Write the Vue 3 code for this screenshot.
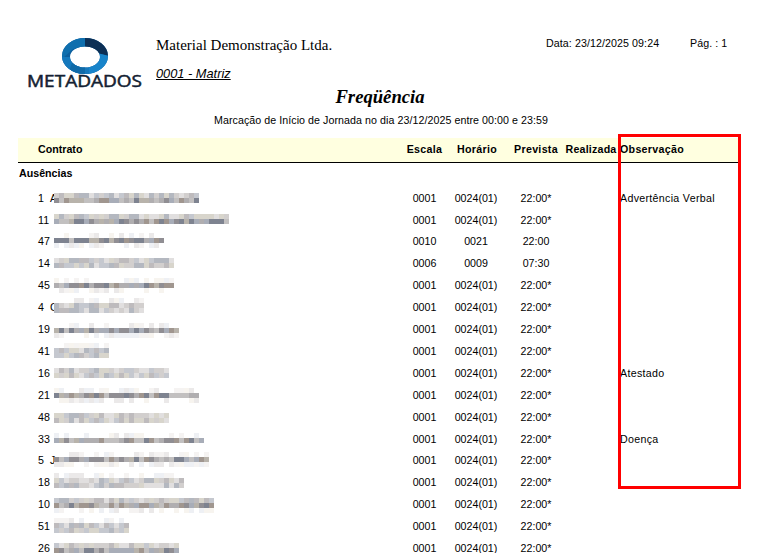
<script setup>
const rows = [
  { n: '1', first: 'A', w: 143, y: 6, bands: [2, 3], esc: '0001', hor: '0024(01)', prev: '22:00*', obs: 'Advertência Verbal' },
  { n: '11', w: 173, y: 5, bands: [2, 3], esc: '0001', hor: '0024(01)', prev: '22:00*', obs: '' },
  { n: '47', w: 108, y: 3, bands: [1, 3, 1], esc: '0010', hor: '0021', prev: '22:00', obs: '' },
  { n: '14', w: 118, y: 6, bands: [2, 2], esc: '0006', hor: '0009', prev: '07:30', obs: '' },
  { n: '45', w: 118, y: 4, bands: [1, 3, 1], esc: '0001', hor: '0024(01)', prev: '22:00*', obs: '' },
  { n: '4', first: 'C', w: 88, y: 2, bands: [1, 2, 2], esc: '0001', hor: '0024(01)', prev: '22:00*', obs: '' },
  { n: '19', w: 123, y: 5, bands: [1, 3, 1], esc: '0001', hor: '0024(01)', prev: '22:00*', obs: '' },
  { n: '41', w: 53, y: 3, bands: [1, 2, 2], esc: '0001', hor: '0024(01)', prev: '22:00*', obs: '' },
  { n: '16', w: 113, y: 6, bands: [2, 2], esc: '0001', hor: '0024(01)', prev: '22:00*', obs: 'Atestado' },
  { n: '21', w: 143, y: 4, bands: [1, 3, 1], esc: '0001', hor: '0024(01)', prev: '22:00*', obs: '' },
  { n: '48', w: 113, y: 7, bands: [2, 2], esc: '0001', hor: '0024(01)', prev: '22:00*', obs: '' },
  { n: '33', w: 148, y: 5, bands: [1, 3], esc: '0001', hor: '0024(01)', prev: '22:00*', obs: 'Doença' },
  { n: '5', first: 'J', w: 153, y: 3, bands: [1, 3, 1], esc: '0001', hor: '0024(01)', prev: '22:00*', obs: '' },
  { n: '18', w: 128, y: 2, bands: [1, 2, 2], esc: '0001', hor: '0024(01)', prev: '22:00*', obs: '' },
  { n: '10', w: 158, y: 5, bands: [2, 3, 1], esc: '0001', hor: '0024(01)', prev: '22:00*', obs: '' },
  { n: '51', w: 73, y: 3, bands: [1, 2, 2], esc: '0001', hor: '0024(01)', prev: '22:00*', obs: '' },
  { n: '26', w: 123, y: 6, bands: [2, 3], esc: '0001', hor: '0024(01)', prev: '22:00*', obs: '' }
]

let seed = 4217
function rnd() {
  seed = (seed * 16807) % 2147483647
  return (seed % 1000) / 1000
}

const palettes = {
  1: ['#f5f3f2', '#eef0f4', '#f7f4ef', '#ebe9e9'],
  2: ['#d2cfce', '#c5c8cf', '#d8d5cc', '#bebbbd', '#e1dfdf', '#b4b8c0'],
  3: ['#b0aeb0', '#908e93', '#a8adb8', '#b8b3ab', '#7e8390', '#a0968f', '#c2c0c0']
}

const mosaics = rows.map((r) => {
  const cells = []
  r.bands.forEach((level, b) => {
    if (!level) return
    for (let x = 0; x < r.w; x += 5) {
      const p = palettes[level]
      if (level === 1 && rnd() < 0.45) continue
      cells.push({ x, y: r.y + b * 5, fill: p[Math.floor(rnd() * p.length)] })
    }
  })
  return cells
})
</script>

<template>
  <div class="page">
    <header class="top">
      <svg class="logo" width="116" height="56" viewBox="0 0 116 56" role="img" aria-label="Metadados">
        <defs>
          <clipPath id="ring">
            <path clip-rule="evenodd" d="M35 19a23 18 0 1 0 46 0a23 18 0 1 0 -46 0zM43 20a15 10.5 0 1 0 30 0a15 10.5 0 1 0 -30 0z" />
          </clipPath>
        </defs>
        <g clip-path="url(#ring)">
          <rect x="30" y="0" width="56" height="40" fill="#0d5f9e" />
          <polygon points="35,0 58,0 58,10 46,12 35,22" fill="#0f6fae" />
          <polygon points="58,0 86,0 86,20 70,16 58,10" fill="#0c2f55" />
          <polygon points="70,16 86,20 86,40 62,40 62,30" fill="#1884ca" />
          <polygon points="30,20 43,20 62,30 62,40 30,40" fill="#1579bd" />
          <polygon points="45,26 58,30 58,40 40,40" fill="#0f6aa8" />
        </g>
        <text class="wordmark" x="0" y="50" textLength="115" lengthAdjust="spacingAndGlyphs">METADADOS</text>
      </svg>
      <div class="company">
        <div class="name">Material Demonstração Ltda.</div>
        <div class="branch">0001 - Matriz</div>
      </div>
      <div class="meta">
        <span class="date">Data: 23/12/2025 09:24</span>
        <span>Pág. : 1</span>
      </div>
    </header>

    <h1 class="title">Freqüência</h1>
    <p class="subtitle">Marcação de Início de Jornada no dia 23/12/2025 entre 00:00 e 23:59</p>

    <div class="sheet">
      <div class="head grid">
        <div class="contract">Contrato</div>
        <div class="c">Escala</div>
        <div class="c hour">Horário</div>
        <div class="c">Prevista</div>
        <div class="c done">Realizada</div>
        <div>Observação</div>
      </div>
      <div class="section">Ausências</div>
      <div v-for="(r, i) in rows" :key="r.n" class="row grid">
        <div class="num">{{ r.n }}</div>
        <div class="person">
          <span v-if="r.first" class="first">{{ r.first }}</span>
          <svg class="blur" width="200" height="22" aria-hidden="true">
            <rect v-for="(m, j) in mosaics[i]" :key="j" :x="m.x" :y="m.y" width="5" height="5" :fill="m.fill" />
          </svg>
        </div>
        <div class="c">{{ r.esc }}</div>
        <div class="c">{{ r.hor }}</div>
        <div class="c">{{ r.prev }}</div>
        <div></div>
        <div class="obs">{{ r.obs }}</div>
      </div>
      <div class="highlight"></div>
    </div>
  </div>
</template>

<style scoped>
.page {
  position: relative;
  width: 759px;
  height: 553px;
  overflow: hidden;
  background: #fff;
  color: #000;
  font-family: "Liberation Sans", Arial, sans-serif;
  font-size: 10.67px;
}
.top {
  display: flex;
  align-items: flex-start;
  height: 63px;
  padding: 25px 0 0 27px;
  box-sizing: content-box;
}
.logo {
  flex: none;
  margin-top: 12px;
}
.wordmark {
  font-family: "Open Sans", "Liberation Sans", sans-serif;
  font-size: 16.5px;
  font-weight: 400;
  fill: #141f33;
  stroke: #141f33;
  stroke-width: 0.5px;
}
.company {
  margin: 11px 0 0 13px;
  width: 390px;
}
.name {
  font-family: "Liberation Serif", "Times New Roman", serif;
  font-size: 15px;
  line-height: 18px;
}
.branch {
  margin-top: 13px;
  font-size: 12.8px;
  line-height: 14px;
  font-style: italic;
  text-decoration: underline;
}
.meta {
  display: flex;
  margin-top: 12px;
  line-height: 12px;
  letter-spacing: 0.08px;
}
.date {
  width: 144px;
}
.title {
  margin: -2px 0 0;
  font-family: "Liberation Serif", "Times New Roman", serif;
  font-size: 18.67px;
  line-height: 22px;
  font-style: italic;
  font-weight: 700;
  text-align: center;
  padding-left: 1px;
}
.subtitle {
  margin: 6px 0 0;
  line-height: 13px;
  text-align: center;
  padding-left: 3px;
  letter-spacing: 0.06px;
}
.sheet {
  position: relative;
  margin: 11px 20px 0 18px;
}
.grid {
  display: grid;
  grid-template-columns: 20px 366px 41px 62px 58px 55px 119px;
  align-items: center;
}
.head {
  grid-template-columns: 386px 41px 62px 58px 55px 119px;
  height: 22px;
  padding-bottom: 2px;
  background: #ffffe0;
  border-bottom: 1px solid #000;
  font-weight: 700;
  white-space: nowrap;
  letter-spacing: 0.3px;
}
.contract {
  padding-left: 20px;
  letter-spacing: 0;
}
.hour {
  padding-left: 2px;
}
.done {
  padding-right: 3px;
  letter-spacing: 0.2px;
}
.section {
  padding: 4px 0 0 1px;
  height: 19.6px;
  line-height: 12px;
  font-weight: 700;
}
.row {
  height: 21.9167px;
  white-space: nowrap;
}
.num {
  grid-column: 1;
  padding-left: 20px;
  width: 16px;
}
.person {
  position: relative;
  height: 22px;
  padding-left: 12px;
  line-height: 22px;
}
.first {
  position: absolute;
  left: 12px;
  top: 0;
}
.blur {
  position: absolute;
  left: 16px;
  top: 0;
}
.c {
  text-align: center;
}
.obs {
  letter-spacing: 0.3px;
}
.highlight {
  position: absolute;
  left: 600px;
  top: -4px;
  width: 117px;
  height: 349px;
  border: 3px solid #f00;
  pointer-events: none;
}
</style>

<style>
html,
body {
  margin: 0;
  overflow: hidden;
}
</style>
